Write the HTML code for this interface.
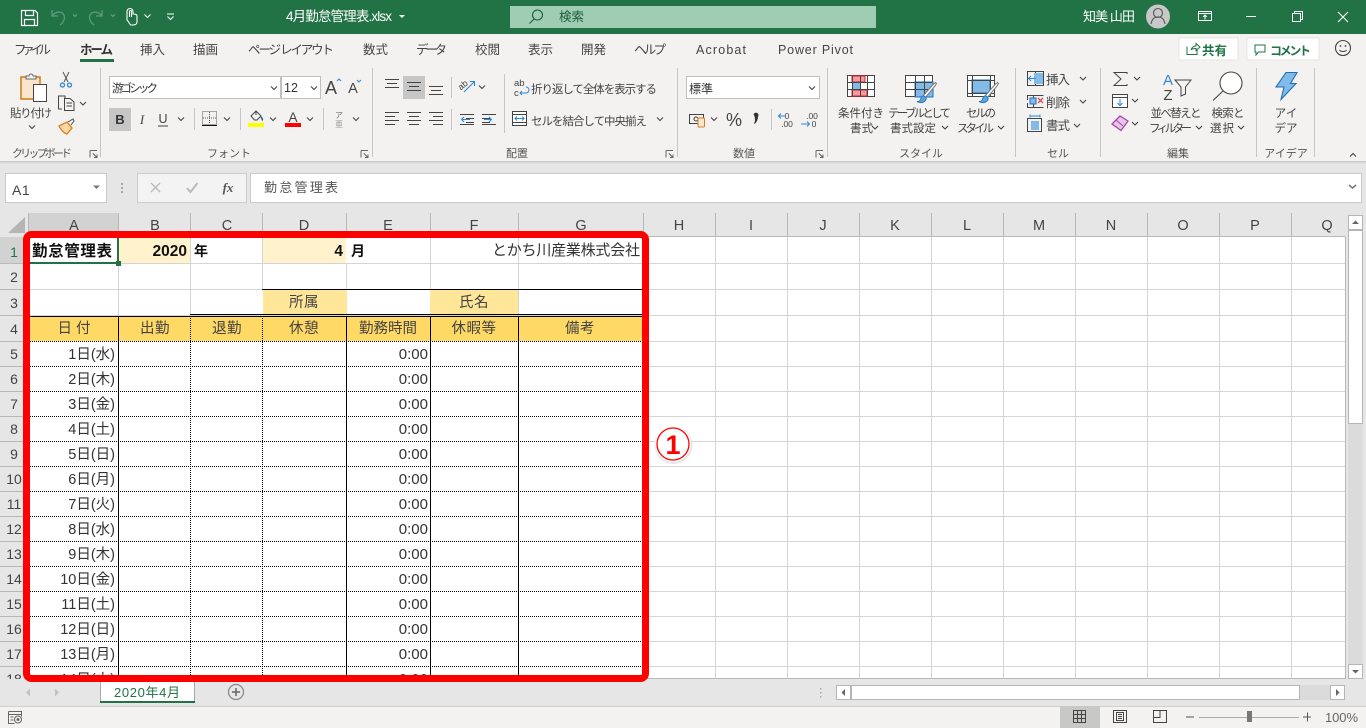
<!DOCTYPE html>
<html lang="ja"><head><meta charset="utf-8"><title>4月勤怠管理表.xlsx</title>
<style>
html,body{margin:0;padding:0;background:#e6e6e6;overflow:hidden}
svg{display:block;font-family:"Liberation Sans","Noto Sans CJK JP",sans-serif}
.r{font-size:11.5px;fill:#444}
.t{font-size:12.5px;fill:#444}
.g{font-size:11px;fill:#555}
.m{text-anchor:middle}
.e{text-anchor:end}
.ch{font-size:14.5px;fill:#444;text-anchor:middle}
.rh{font-size:14px;fill:#444;text-anchor:middle}
.c{font-size:15px;fill:#333}
.d{font-size:14.5px;fill:#333;text-anchor:end}
.z{font-size:15px;fill:#333;text-anchor:end}
.b{font-size:15.5px;font-weight:bold;fill:#111}
.h{font-size:14.5px;fill:#444;text-anchor:middle;letter-spacing:.5px}
.ic{fill:none;stroke:#444;stroke-width:1}
.cr{shape-rendering:crispEdges}
</style></head><body>
<svg width="1366" height="728" viewBox="0 0 1366 728" xmlns="http://www.w3.org/2000/svg">
<defs>
<path id="v" d="M-3,-1.5L0,1.5L3,-1.5" fill="none" stroke="#444" stroke-width="1.1"/>
<path id="w" d="M-3,-1.5L0,1.5L3,-1.5" fill="none" stroke="#fff" stroke-width="1.1"/>
</defs>
<!-- backgrounds -->
<rect width="1366" height="728" fill="#e6e6e6"/>
<rect width="1366" height="34" fill="#217346"/>
<rect y="34" width="1366" height="127" fill="#f3f2f1"/>
<rect y="161" width="1366" height="1" fill="#c9c9c9"/>
<rect y="162" width="1366" height="1" fill="#d9d9d9"/>
<rect y="163" width="1366" height="1" fill="#e0e0e0"/>

<!-- title bar -->
<g fill="none" stroke="#fff" stroke-width="1.2">
<path d="M21.5,10.5H35L37.5,13V25.5H21.5Z"/><path d="M25.5,10.5V15.5H33.5V10.5M24.5,25.5V19.5H34.5V25.5"/>
</g>
<g fill="none" stroke="#5f9a7c" stroke-width="1.3">
<path d="M52,10V16H58M52.5,15.5C56,11 62,11 64,15C65.5,19 63,23 60,25"/>
<path d="M102,10V16H96M101.5,15.5C98,11 92,11 90,15C88.5,19 91,23 94,25"/>
<path d="M73,14.5l2,2l2,-2M111,14.5l2,2l2,-2"/>
</g>
<path d="M127,19V11.5a3,3 0 0 1 6,0V14c2,0 4,.5 4,2V22c0,2 -2,3 -4,3H131c-1,0 -2,-3 -4,-5ZM129.500,17V11.5a1,1 0 0 1 2,0V17" fill="none" stroke="#fff" stroke-width="1.1"/>
<use href="#w" x="147.5" y="16"/>
<path d="M167,14h7" stroke="#fff"/><use href="#w" x="170.5" y="18"/>
<text x="286" y="21" font-size="13.5" fill="#fff" textLength="106">4月勤怠管理表.xlsx</text>
<path d="M399,15h6l-3,3z" fill="#fff"/>
<rect x="510" y="6" width="366" height="22" fill="#9fcdb3"/>
<circle cx="537.5" cy="15" r="5" fill="none" stroke="#1d5c3b" stroke-width="1.1"/><path d="M534,19L529.500,23.500" stroke="#1d5c3b" stroke-width="1.1"/>
<text x="559" y="21" font-size="12.500" fill="#1d5c3b">検索</text>
<text x="1083" y="21" font-size="13" fill="#fff" textLength="52">知美 山田</text>
<circle cx="1158" cy="16.500" r="12" fill="#c8c8c8"/>
<circle cx="1158" cy="13" r="4.500" fill="none" stroke="#555" stroke-width="1.100"/><path d="M1151,24c1,-5 3,-7 7,-7s6,2 7,7" fill="none" stroke="#555" stroke-width="1.100"/>
<g fill="none" stroke="#fff" stroke-width="1" class="cr">
<rect x="1198.500" y="11.500" width="13" height="9"/><path d="M1198,13.500h14"/><path d="M1205,19.500v-4M1203,17l2,-2l2,2"/>
<path d="M1246,16.500h10"/>
<rect x="1292.500" y="13.500" width="8" height="8"/><path d="M1294.500,13V11.500H1302.500V19.500H1301"/>
</g>
<path d="M1338,12l10,10M1348,12l-10,10" stroke="#fff" stroke-width="1.100"/>

<!-- tabs -->
<text x="14" y="54" class="t" textLength="37">ファイル</text>
<text x="80" y="54" class="t" textLength="33" font-weight="bold" style="fill:#333">ホーム</text>
<rect x="80" y="59" width="34" height="3" fill="#217346"/>
<text x="140" y="54" class="t">挿入</text>
<text x="193" y="54" class="t">描画</text>
<text x="248" y="54" class="t" textLength="86">ページ レイアウト</text>
<text x="363" y="54" class="t">数式</text>
<text x="416" y="54" class="t" textLength="31">データ</text>
<text x="475" y="54" class="t">校閲</text>
<text x="528" y="54" class="t">表示</text>
<text x="581" y="54" class="t">開発</text>
<text x="634" y="54" class="t" textLength="32">ヘルプ</text>
<text x="696" y="54" class="t" textLength="50">Acrobat</text>
<text x="778" y="54" class="t" textLength="75">Power Pivot</text>
<rect x="1179" y="38" width="59" height="22" rx="1" fill="#fff" stroke="#e4e4e4"/>
<rect x="1247" y="38" width="72" height="22" rx="1" fill="#fff" stroke="#e4e4e4"/>
<path d="M1187,46.500V54.500H1197V50M1191,50c1,-3 3,-4 5,-4V43.500l4,3.500l-4,3.500V48.500c-2,0 -4,0 -5,1.500Z" fill="none" stroke="#217346" stroke-width="1"/>
<text x="1202" y="55" font-size="12.500" font-weight="bold" fill="#217346">共有</text>
<path d="M1255,45H1265V52H1258.500L1256,55V52H1255Z" fill="none" stroke="#217346" stroke-width="1"/>
<text x="1270" y="55" font-size="12" font-weight="bold" fill="#217346" textLength="41">コメント</text>
<circle cx="1343" cy="48" r="7.500" fill="none" stroke="#444" stroke-width="1.100"/><circle cx="1340.500" cy="46" r=".9" fill="#444"/><circle cx="1345.500" cy="46" r=".9" fill="#444"/><path d="M1339.500,50c1,2 6,2 7,0" fill="none" stroke="#444"/>

<!-- ribbon separators -->
<g fill="#c6c6c6" class="cr">
<rect x="100" y="68" width="1" height="89"/><rect x="372" y="68" width="1" height="89"/><rect x="677" y="68" width="1" height="89"/><rect x="827" y="68" width="1" height="89"/><rect x="1015" y="68" width="1" height="89"/><rect x="1100" y="68" width="1" height="89"/><rect x="1256" y="68" width="1" height="89"/><rect x="1314" y="68" width="1" height="89"/>
<rect x="194" y="108" width="1" height="22"/><rect x="240" y="108" width="1" height="22"/><rect x="323" y="108" width="1" height="22"/>
<rect x="451" y="77" width="1" height="21"/><rect x="451" y="109" width="1" height="21"/><rect x="504" y="74" width="1" height="59"/><rect x="771" y="109" width="1" height="21"/>
</g>

<!-- group labels -->
<text x="42" y="157" class="g m" textLength="60">クリップボード</text>
<text x="229" y="157" class="g m">フォント</text>
<text x="517" y="157" class="g m">配置</text>
<text x="744" y="157" class="g m">数値</text>
<text x="921" y="157" class="g m">スタイル</text>
<text x="1058" y="157" class="g m">セル</text>
<text x="1178" y="157" class="g m">編集</text>
<text x="1286" y="157" class="g m">アイデア</text>
<g fill="none" stroke="#666" class="cr">
<path d="M90,150.500h7M90,150.500v7M97,157.500l-4,-4M97,154.500v3h-3"/>
<path d="M361,150.500h7M361,150.500v7M368,157.500l-4,-4M368,154.500v3h-3"/>
<path d="M666,150.500h7M666,150.500v7M673,157.500l-4,-4M673,154.500v3h-3"/>
<path d="M816,150.500h7M816,150.500v7M823,157.500l-4,-4M823,154.500v3h-3"/>
</g>
<use href="#v" x="1353" y="155" transform="rotate(180 1353 155)"/>

<!-- clipboard -->
<rect x="21" y="77" width="19" height="22" fill="#fbe6cc" stroke="#d67f1f" stroke-width="1.600"/>
<path d="M26,79V76h3a2,2 0 0 1 4,0h3V79Z" fill="#f3f2f1" stroke="#666"/>
<rect x="33.500" y="84.500" width="13" height="17" fill="#fff" stroke="#444"/>
<text x="31" y="117" class="r m" textLength="42">貼り付け</text>
<use href="#v" x="32" y="127"/>
<path d="M63,72l5,10M69,72l-5,10" stroke="#555" fill="none"/><circle cx="62.500" cy="85" r="2" fill="none" stroke="#2b88d8" stroke-width="1.300"/><circle cx="69.500" cy="85" r="2" fill="none" stroke="#2b88d8" stroke-width="1.300"/>
<path d="M62,109H58.500V96H65V98M64.500,98.500H70L74,102V110.500H64.500ZM66.500,103H72M66.500,106H72" fill="none" stroke="#444"/>
<use href="#v" x="83" y="103.500"/>
<path d="M59,126l8,-4l5,6l-5,6c-3,-1 -6,-4 -8,-8Z" fill="#fbd7a8" stroke="#d67f1f" stroke-width="1.300"/><path d="M68,122l5,-3l1,2l-3,4" fill="none" stroke="#555"/>

<!-- font group -->
<rect x="109.500" y="76.500" width="171" height="22" fill="#fff" stroke="#c0c0c0"/>
<rect x="281.500" y="76.500" width="39" height="22" fill="#fff" stroke="#c0c0c0"/>
<text x="112" y="92" font-size="11.500" fill="#333" textLength="46">游ゴシック</text>
<use href="#v" x="274" y="88"/>
<text x="284" y="92" font-size="12.500" fill="#333">12</text>
<use href="#v" x="314" y="88"/>
<text x="331" y="94" font-size="18" fill="#444" class="m">A</text>
<path d="M337,81l2,-2l2,2" fill="none" stroke="#2b88d8"/>
<text x="353" y="93" font-size="14.500" fill="#444" class="m">A</text>
<path d="M357,80l2,2l2,-2" fill="none" stroke="#2b88d8"/>
<rect x="109" y="108" width="22" height="23" fill="#c6c6c6"/>
<text x="120" y="124" font-size="13" font-weight="bold" fill="#333" class="m">B</text>
<text x="142" y="124" font-size="13" font-style="italic" fill="#444" class="m" font-family="Liberation Serif">I</text>
<text x="163" y="123" font-size="12.500" fill="#444" class="m">U</text><path d="M158,126h10" stroke="#444"/>
<use href="#v" x="181" y="119"/>
<g class="cr"><rect x="202.500" y="111.500" width="14" height="13" fill="none" stroke="#555" stroke-dasharray="1 1"/><path d="M209.500,112v12M203,118h13" stroke="#555" stroke-dasharray="1 1"/><rect x="202" y="125" width="15" height="1" fill="#111"/></g>
<use href="#v" x="227" y="119"/>
<path d="M251,116l5,-5l5,5l-4,4h-2.500ZM256,111v4" fill="none" stroke="#444"/><path d="M261,117c1,1 2,2 1,3.500" stroke="#1e5a9a" stroke-width="1.500" fill="none"/>
<rect x="248" y="123" width="16" height="4" fill="#ffff00"/>
<use href="#v" x="273" y="119"/>
<text x="293" y="122" font-size="13.500" fill="#444" class="m">A</text>
<rect x="285" y="123" width="16" height="4" fill="#ff0000"/>
<use href="#v" x="310" y="119"/>
<text x="339" y="118" font-size="8" fill="#777" class="m">ア</text><text x="339" y="127" font-size="8" fill="#999" class="m">亜</text>
<use href="#v" x="356" y="119"/>

<!-- alignment -->
<rect x="403" y="76" width="22" height="23" fill="#c6c6c6"/>
<g class="cr" stroke="#444" fill="none">
<path d="M385,79.500h14M387,83.500h10M385,87.500h14"/>
<path d="M407,82.500h14M409,86.500h10M407,90.500h14"/>
<path d="M429,86.500h14M431,90.500h10M429,94.500h14"/>
<path d="M385,112.500h14M385,116.500h10M385,120.500h14M385,124.500h10"/>
<path d="M407,112.500h14M409,116.500h10M407,120.500h14M409,124.500h10"/>
<path d="M429,112.500h14M433,116.500h10M429,120.500h14M433,124.500h10"/>
<path d="M460,114.500h14M466,118.500h8M466,122.500h8M460,124.500h14"/>
<path d="M482,114.500h14M482,118.500h8M482,122.500h8M482,124.500h14"/>
</g>
<path d="M470,119.500h-8M464,117l-2.500,2.500l2.500,2.500M484,119.500h7M489,117l2.500,2.500l-2.500,2.500" fill="none" stroke="#2b88d8"/>
<text x="460" y="88" font-size="9" fill="#444" transform="rotate(-40 464 88)">ab</text>
<path d="M464,92L474,82M470,81.500h4.500V86" fill="none" stroke="#2b88d8" stroke-width="1.100"/>
<use href="#v" x="482" y="87"/>
<text x="514" y="86" font-size="9.500" fill="#444">ab</text><text x="514" y="96" font-size="9.500" fill="#444">c</text>
<path d="M520,93h6a2.500,2.500 0 0 0 0,-6M522,91l-2,2l2,2" fill="none" stroke="#2b88d8"/>
<text x="531" y="93" class="r" textLength="126">折り返して全体を表示する</text>
<rect x="512.500" y="111.500" width="14" height="14" fill="#fff" stroke="#444"/><path d="M513,114.500h14M513,122.500h14" stroke="#444"/>
<path d="M515,118.500h9M517,116.500l-2,2l2,2M522,116.500l2,2l-2,2" fill="none" stroke="#2b88d8"/>
<text x="531" y="125" class="r" textLength="116">セルを結合して中央揃え</text>
<use href="#v" x="660" y="119"/>

<!-- number -->
<rect x="686.500" y="76.500" width="133" height="22" fill="#fff" stroke="#c0c0c0"/>
<text x="689" y="93" font-size="12" fill="#333">標準</text>
<use href="#v" x="812" y="88"/>
<rect x="689.500" y="114.500" width="14" height="9" fill="none" stroke="#444"/><circle cx="696" cy="119" r="2" fill="none" stroke="#444"/>
<rect x="698" y="118" width="6.500" height="9" rx="1" fill="#fbe6cc" stroke="#d67f1f"/>
<use href="#v" x="714" y="119"/>
<text x="734" y="126" font-size="18" fill="#444" class="m">%</text>
<path d="M754,115a2,2 0 1 1 3.500,1.500c0,3 -1,5 -3,7c1,-2 1.500,-4 .5,-5.500" fill="#333" stroke="#333"/>
<text x="787" y="119" font-size="8.500" fill="#444" class="m">0</text><text x="787" y="127" font-size="8.500" fill="#444" class="m">.00</text>
<path d="M786,116h-7M781,113.500l-2.500,2.500l2.500,2.500" fill="none" stroke="#2b88d8"/>
<text x="812" y="119" font-size="8.500" fill="#444" class="m">.00</text><text x="814" y="127" font-size="8.500" fill="#444" class="m">0</text>
<path d="M801,124h8M807,121.500l2.500,2.500l-2.500,2.500" fill="none" stroke="#2b88d8"/>

<!-- styles -->
<g class="cr">
<rect x="847.500" y="75.500" width="27" height="21" fill="#fff" stroke="#444"/>
<rect x="852" y="76" width="13" height="6" fill="#f79a9f" stroke="#d8232a"/>
<rect x="852" y="83" width="8" height="6" fill="#83bbe8"/>
<rect x="852" y="90" width="15" height="6" fill="#f79a9f" stroke="#d8232a"/>
<path d="M848,82.500h26M848,89.500h26M852.500,76v20M860.500,76v20M867.500,76v20" stroke="#444" fill="none"/>
<rect x="905.500" y="75.500" width="27" height="21" fill="#fff" stroke="#444"/>
<rect x="915" y="82" width="18" height="15" fill="#83bbe8" stroke="#1e6fb8"/>
<path d="M906,82.500h26M906,89.500h26M915.500,76v20M924.500,76v20" stroke="#444" fill="none"/>
<rect x="967.500" y="75.500" width="27" height="21" fill="#fff" stroke="#444"/>
<rect x="972" y="80" width="18" height="13" fill="#83bbe8" stroke="#1e6fb8"/>
<path d="M972.500,76v20M990.500,76v20M968,80.500h26M968,93.500h26" stroke="#444" fill="none"/>
</g>
<path d="M923,96L933,84.500l2.500,-2l1,1l-1.500,2.500l-10,12Z" fill="#fff" stroke="#777"/>
<path d="M917,101.500c2.500,0 3.500,-1 4,-3.500c.7,-2.500 3.500,-2.500 4.500,-1c1.500,2 0,4 -2,5c-2,1 -4.500,.5 -6.500,-.5Z" fill="#5ca6e0" stroke="#2b78b8"/>
<path d="M985,96L995,84.500l2.500,-2l1,1l-1.500,2.500l-10,12Z" fill="#fff" stroke="#777"/>
<path d="M979,101.500c2.500,0 3.500,-1 4,-3.500c.7,-2.500 3.500,-2.500 4.500,-1c1.500,2 0,4 -2,5c-2,1 -4.500,.5 -6.500,-.5Z" fill="#5ca6e0" stroke="#2b78b8"/>
<text x="838" y="117" class="r" textLength="46">条件付き</text>
<text x="850" y="132" class="r">書式</text><use href="#v" x="875" y="127.500"/>
<text x="888" y="117" class="r" textLength="63">テーブルとして</text>
<text x="890" y="132" class="r" textLength="46">書式設定</text><use href="#v" x="945" y="127.500"/>
<text x="981" y="117" class="r m" textLength="30">セルの</text>
<text x="957" y="132" class="r" textLength="37">スタイル</text><use href="#v" x="1001" y="127.500"/>

<!-- cells -->
<g class="cr" fill="none" stroke="#444">
<path d="M1027.500,71.500h16v14h-16ZM1027.500,78.500h16M1035.500,71.500v14"/>
<path d="M1027.500,95.500h16M1027.500,107.500h16M1033.500,95v13M1027.500,95v5M1027.500,103v5"/>
<rect x="1027.500" y="118.500" width="14" height="13"/>
</g>
<rect x="1034" y="73" width="9" height="11" fill="#83bbe8"/>
<path d="M1036,78.500h-7M1031,76l-2.500,2.500l2.500,2.500" fill="none" stroke="#2b88d8"/>
<rect x="1030" y="98" width="6" height="6" fill="#83bbe8" stroke="#1e6fb8"/>
<path d="M1038,98l5,5M1043,98l-5,5" stroke="#e04a4a" stroke-width="1.300"/>
<rect x="1031" y="121" width="8" height="9" fill="#83bbe8"/>
<path d="M1030,116h10M1030,114.500v3M1040,114.500v3" stroke="#2b88d8" fill="none"/>
<text x="1046" y="84" class="t" textLength="24">挿入</text><use href="#v" x="1083" y="78.500"/>
<text x="1046" y="107" class="t" textLength="24">削除</text><use href="#v" x="1083" y="101.500"/>
<text x="1046" y="130" class="t" textLength="24">書式</text><use href="#v" x="1077" y="125.500"/>

<!-- edit -->
<path d="M1127,74V72.500H1114L1121,79L1114,85.500H1127V84" fill="none" stroke="#444" stroke-width="1"/>
<use href="#v" x="1137" y="78.500"/>
<rect x="1112.500" y="94.500" width="15" height="13" fill="#fff" stroke="#444"/><path d="M1112,97.500h16" stroke="#444"/>
<path d="M1120,99v6M1117.500,103l2.500,2.500l2.500,-2.500" fill="none" stroke="#2b88d8"/>
<use href="#v" x="1135" y="100.500"/>
<path d="M1112,124l8,-8l8,5l-7,9.500Z" fill="#e8c4ea" stroke="#a64aa8" stroke-width="1.300"/><path d="M1116,120l7,6" stroke="#a64aa8"/>
<use href="#v" x="1135" y="123.500"/>
<text x="1168" y="85" font-size="15" fill="#2b88d8" class="m">A</text>
<text x="1168" y="100" font-size="15" fill="#444" class="m">Z</text>
<path d="M1175,80H1191L1185.500,87V94L1181,96V87Z" fill="none" stroke="#444"/>
<circle cx="1231" cy="83" r="11" fill="#fff" stroke="#444" stroke-width="1.100"/><path d="M1223,91L1213,100.500" stroke="#444" stroke-width="1.100"/>
<text x="1176" y="117" class="r m" textLength="51">並べ替えと</text>
<text x="1149" y="132" class="r" textLength="43">フィルター</text><use href="#v" x="1199" y="127.500"/>
<text x="1228" y="117" class="r m" textLength="33">検索と</text>
<text x="1210" y="132" class="r" textLength="24">選択</text><use href="#v" x="1241" y="127.500"/>
<path d="M1286,72.500H1297L1290.500,83.500H1296L1281,99.500L1284,87H1276Z" fill="#83bbe8" stroke="#1e6fb8" stroke-width="1.100"/>
<text x="1286" y="117" class="r m">アイ</text>
<text x="1286" y="132" class="r m">デア</text>

<!-- formula bar -->
<rect x="5.500" y="173.500" width="101" height="29" fill="#fff" stroke="#ccc"/>
<text x="12" y="195" font-size="14" fill="#444" letter-spacing=".5">A1</text>
<path d="M93,185.500h7l-3.500,3.500z" fill="#777"/>
<g fill="#aaa"><rect x="121" y="183" width="2" height="2"/><rect x="121" y="187" width="2" height="2"/><rect x="121" y="191" width="2" height="2"/></g>
<rect x="137.500" y="173.500" width="109" height="29" fill="#f3f3f3" stroke="#ccc"/>
<rect x="250.500" y="173.500" width="1111" height="29" fill="#fff" stroke="#ccc"/>
<path d="M151,183l9,9M160,183l-9,9" stroke="#bbb" stroke-width="1.500"/>
<path d="M187,188l3.500,4l7,-9" fill="none" stroke="#bbb" stroke-width="2"/>
<text x="228" y="192" font-size="13" font-style="italic" font-weight="bold" fill="#555" class="m" font-family="Liberation Serif">fx</text>
<text x="264" y="192" font-size="13" fill="#555" textLength="74">勤怠管理表</text>
<path d="M1349,185l3.500,3l3.500,-3" fill="none" stroke="#777" stroke-width="1.500"/>

<!-- column & row headers -->
<rect x="118" y="213" width="1227" height="24" fill="#e6e6e6"/>
<rect x="28" y="213" width="90" height="24" fill="#d2d2d2"/>
<rect x="0" y="237" width="28" height="441" fill="#e6e6e6"/>
<rect x="0" y="237" width="28" height="26" fill="#d2d2d2"/>
<path d="M25,217V233H8Z" fill="#b5b5b5"/>
<g class="cr" fill="none" stroke="#b8b8b8">
<path d="M118.500,213v24M190.500,213v24M262.500,213v24M346.500,213v24M430.500,213v24M518.500,213v24M643.500,213v24M715.500,213v24M787.500,213v24M859.500,213v24M931.500,213v24M1003.500,213v24M1075.500,213v24M1147.500,213v24M1219.500,213v24M1291.500,213v24M28.500,213v24"/>
<path d="M0,263.500h28M0,289.500h28M0,315.500h28M0,341.500h28M0,366.500h28M0,391.500h28M0,416.500h28M0,441.500h28M0,466.500h28M0,491.500h28M0,516.500h28M0,541.500h28M0,566.500h28M0,591.500h28M0,616.500h28M0,641.500h28M0,666.500h28"/>
<path d="M28,236.500H1345.500M1345.500,237V678.500H28"/>
</g>
<text x="74" y="230" class="ch">A</text><text x="155" y="230" class="ch">B</text><text x="227" y="230" class="ch">C</text><text x="304" y="230" class="ch">D</text><text x="388" y="230" class="ch">E</text><text x="474" y="230" class="ch">F</text><text x="581" y="230" class="ch">G</text><text x="679" y="230" class="ch">H</text><text x="751" y="230" class="ch">I</text><text x="823" y="230" class="ch">J</text><text x="895" y="230" class="ch">K</text><text x="967" y="230" class="ch">L</text><text x="1039" y="230" class="ch">M</text><text x="1111" y="230" class="ch">N</text><text x="1183" y="230" class="ch">O</text><text x="1255" y="230" class="ch">P</text><text x="1327" y="230" class="ch">Q</text>
<text x="14" y="257" class="rh" style="fill:#217346">1</text><text x="14" y="282" class="rh">2</text><text x="14" y="308" class="rh">3</text><text x="14" y="334" class="rh">4</text><text x="14" y="359" class="rh">5</text><text x="14" y="384" class="rh">6</text><text x="14" y="409" class="rh">7</text><text x="14" y="434" class="rh">8</text><text x="14" y="459" class="rh">9</text><text x="14" y="484" class="rh">10</text><text x="14" y="509" class="rh">11</text><text x="14" y="534" class="rh">12</text><text x="14" y="559" class="rh">13</text><text x="14" y="584" class="rh">14</text><text x="14" y="609" class="rh">15</text><text x="14" y="634" class="rh">16</text><text x="14" y="659" class="rh">17</text><text x="14" y="684" class="rh">18</text>

<!-- sheet -->
<rect x="28" y="237" width="1317" height="441" fill="#fff"/>
<rect x="119" y="238" width="71" height="25" fill="#fff2cc"/>
<rect x="263" y="238" width="83" height="25" fill="#fff2cc"/>
<rect x="263" y="290" width="84" height="25" fill="#ffe699"/>
<rect x="430" y="290" width="89" height="25" fill="#ffe699"/>
<rect x="28" y="316" width="615" height="25" fill="#ffd966"/>
<g class="cr" fill="none" stroke="#d4d4d4">
<path d="M28,263.500H1345M28,289.500H1345M28,315.500H1345M643,341.500H1345M643,366.500H1345M643,391.500H1345M643,416.500H1345M643,441.500H1345M643,466.500H1345M643,491.500H1345M643,516.500H1345M643,541.500H1345M643,566.500H1345M643,591.500H1345M643,616.500H1345M643,641.500H1345M643,666.500H1345"/>
<path d="M118.500,237V315M190.500,237V315M262.500,237V289M346.500,263V289M430.500,237V289M518.500,237V315M643.500,237V678M715.500,237V678M787.500,237V678M859.500,237V678M931.500,237V678M1003.500,237V678M1075.500,237V678M1147.500,237V678M1219.500,237V678M1291.500,237V678"/>
</g>
<g class="cr" fill="none" stroke="#000">
<path d="M262,289.500H643M190,314.500H643M28,316.500H643"/>
<path d="M118.500,316V678M346.500,316V678M430.500,316V678M518.500,316V678"/>
<path stroke-dasharray="1 1" d="M190.500,316V678M262.500,316V678"/>
<path stroke-dasharray="1 1" d="M28,341.500H643M28,366.500H643M28,391.500H643M28,416.500H643M28,441.500H643M28,466.500H643M28,491.500H643M28,516.500H643M28,541.500H643M28,566.500H643M28,591.500H643M28,616.500H643M28,641.500H643M28,666.500H643"/>
</g>
<!-- cell text -->
<text x="32" y="256" class="b" textLength="80">勤怠管理表</text>
<text x="187" y="256" class="b e">2020</text>
<text x="194" y="256" class="b" style="font-size:14px">年</text>
<text x="343" y="256" class="b e">4</text>
<text x="351" y="256" class="b" style="font-size:14px">月</text>
<text x="640" y="255" class="c e" textLength="148">とかち川産業株式会社</text>
<text x="304" y="307" class="h">所属</text>
<text x="474" y="307" class="h">氏名</text>
<text x="74" y="333" class="h" style="letter-spacing:0">日 付</text>
<text x="155" y="333" class="h">出勤</text>
<text x="227" y="333" class="h">退勤</text>
<text x="304" y="333" class="h">休憩</text>
<text x="388" y="333" class="h" style="letter-spacing:0">勤務時間</text>
<text x="474" y="333" class="h">休暇等</text>
<text x="580" y="333" class="h">備考</text>
<text x="115" y="359" class="d">1日(水)</text><text x="115" y="384" class="d">2日(木)</text><text x="115" y="409" class="d">3日(金)</text><text x="115" y="434" class="d">4日(土)</text><text x="115" y="459" class="d">5日(日)</text><text x="115" y="484" class="d">6日(月)</text><text x="115" y="509" class="d">7日(火)</text><text x="115" y="534" class="d">8日(水)</text><text x="115" y="559" class="d">9日(木)</text><text x="115" y="584" class="d">10日(金)</text><text x="115" y="609" class="d">11日(土)</text><text x="115" y="634" class="d">12日(日)</text><text x="115" y="659" class="d">13日(月)</text><text x="115" y="684" class="d">14日(火)</text>
<text x="428" y="359" class="z">0:00</text><text x="428" y="384" class="z">0:00</text><text x="428" y="409" class="z">0:00</text><text x="428" y="434" class="z">0:00</text><text x="428" y="459" class="z">0:00</text><text x="428" y="484" class="z">0:00</text><text x="428" y="509" class="z">0:00</text><text x="428" y="534" class="z">0:00</text><text x="428" y="559" class="z">0:00</text><text x="428" y="584" class="z">0:00</text><text x="428" y="609" class="z">0:00</text><text x="428" y="634" class="z">0:00</text><text x="428" y="659" class="z">0:00</text><text x="428" y="684" class="z">0:00</text>
<!-- selection -->
<g class="cr" fill="#217346">
<rect x="30" y="262" width="89" height="2"/><rect x="117" y="238" width="2" height="26"/><rect x="116" y="261" width="5" height="5"/>
</g>

<!-- lower bars -->
<rect x="0" y="679" width="1366" height="27" fill="#e6e6e6"/>
<rect x="1346" y="213" width="20" height="466" fill="#e6e6e6"/>
<!-- v scrollbar -->
<rect x="1348" y="215" width="15" height="463" fill="#dbdbdb"/>
<rect x="1348.500" y="215.500" width="14" height="14" fill="#fff" stroke="#b5b5b5"/>
<rect x="1348.500" y="230.500" width="14" height="193" fill="#fff" stroke="#b5b5b5"/>
<rect x="1348.500" y="664.500" width="14" height="14" fill="#fff" stroke="#b5b5b5"/>
<path d="M1352,224l3.500,-3.500l3.500,3.500z" fill="#666"/><path d="M1352,670l3.500,3.500l3.500,-3.500z" fill="#666"/>
<!-- tabs -->
<path d="M26,692.500l4,-4v8z" fill="#c2c2c2"/><path d="M59,692.500l-4,-4v8z" fill="#c2c2c2"/>
<rect x="100" y="681" width="94" height="21" fill="#fff"/>
<path d="M100.500,681v22M194.500,681v22" stroke="#aaa" class="cr"/>
<rect x="100" y="701" width="95" height="2" fill="#217346"/>
<text x="147" y="697" font-size="13" fill="#217346" class="m" textLength="66">2020年4月</text>
<circle cx="236" cy="692" r="7.500" fill="none" stroke="#888" stroke-width="1.200"/><path d="M232,692h8M236,688v8" stroke="#666" stroke-width="1.500"/>
<g fill="#aaa"><rect x="820" y="688" width="1.500" height="1.500"/><rect x="820" y="692" width="1.500" height="1.500"/><rect x="820" y="696" width="1.500" height="1.500"/></g>
<!-- h scrollbar -->
<rect x="836" y="685" width="509" height="15" fill="#dbdbdb"/>
<rect x="836.500" y="685.500" width="14" height="14" fill="#fff" stroke="#b5b5b5"/>
<rect x="851.500" y="685.500" width="448" height="14" fill="#fff" stroke="#b5b5b5"/>
<rect x="1330.500" y="685.500" width="14" height="14" fill="#fff" stroke="#b5b5b5"/>
<path d="M845,689v7l-3.500,-3.500z" fill="#666"/><path d="M1336,689v7l3.500,-3.500z" fill="#666"/>
<!-- status -->
<rect y="706" width="1366" height="22" fill="#f3f2f1"/>
<rect y="706" width="1366" height="1" fill="#cfcfcf"/>
<path d="M8.500,711.500h13v5M8.500,711.500v12h6M8.500,714.500h13M10.500,717h3M10.500,720h3" fill="none" stroke="#666"/>
<circle cx="18" cy="719.500" r="3.500" fill="none" stroke="#666"/><circle cx="18" cy="719.500" r="1.500" fill="#666"/>
<rect x="1060" y="706" width="40" height="22" fill="#c8c8c6"/>
<g class="cr" fill="none" stroke="#444">
<path d="M1073.500,710.500h12v12h-12ZM1073.500,714.500h12M1073.500,718.500h12M1077.500,710.500v12M1081.500,710.500v12"/>
<rect x="1113.500" y="710.500" width="13" height="12"/><rect x="1116.500" y="712.500" width="7" height="8"/><path d="M1118,714.500h4M1118,716.500h4M1118,718.500h4"/>
<rect x="1153.500" y="710.500" width="13" height="12"/><path d="M1153.500,717.500h6.500v-7M1160,717.500"/>
</g>
<path d="M1186,717h8M1303,717h8M1307.500,712.500v9" stroke="#555" class="cr"/>
<rect x="1199" y="717" width="100" height="1" fill="#aaa"/>
<rect x="1247" y="711" width="5" height="11" fill="#777"/>
<text x="1325" y="722" font-size="13" fill="#666" textLength="33">100%</text>

<!-- red frame -->
<rect x="26.500" y="234.500" width="619" height="444" rx="5" fill="none" stroke="#ff0000" stroke-width="7"/>
<!-- circled number -->
<circle cx="673.500" cy="445" r="19" fill="#dcdcdc" opacity=".7"/>
<circle cx="673" cy="444" r="18" fill="#fff"/>
<circle cx="673" cy="444" r="16" fill="#fff" stroke="#ff0000" stroke-width="1.300"/>
<text x="673" y="454" font-size="27" font-weight="bold" fill="#ff0000" class="m">1</text>
</svg>
</body></html>
